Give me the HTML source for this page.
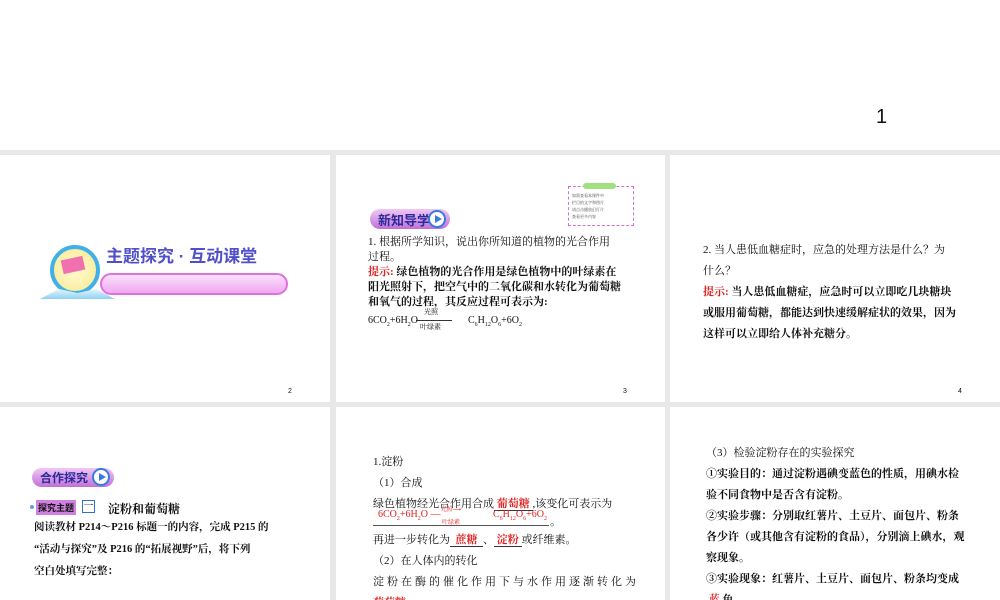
<!DOCTYPE html>
<html><head><meta charset="utf-8"><style>
*{margin:0;padding:0;box-sizing:border-box}
body{width:1000px;height:600px;background:#fff;position:relative;overflow:hidden;font-family:"Liberation Serif","Noto Serif CJK SC",serif;color:#111}
.bg{position:absolute;left:0;top:150px;width:1000px;height:450px;background:#e8e8e8}
.s{position:absolute;background:#fff;overflow:hidden}
.t{position:absolute;white-space:nowrap;font-size:12px}
.r{color:#e02020}
.n{position:absolute;font-size:7px;font-family:"Liberation Sans",sans-serif}
.sans{font-family:"Liberation Sans","Noto Sans CJK SC",sans-serif}
.pill{position:absolute;height:20px;border-radius:10px;background:linear-gradient(#f0c8f4,#c070d8);}
.pill span{position:absolute;left:8px;top:1px;font-size:13px;font-weight:bold;color:#2a2a9a;font-family:"Liberation Sans","Noto Sans CJK SC",sans-serif}
.pill i{position:absolute;top:1px;width:18px;height:18px;border-radius:50%;background:#fff;border:2px solid #3a7ae0}
.pill i:after{content:"";position:absolute;left:5px;top:3px;border-left:7px solid #3a7ae0;border-top:4.5px solid transparent;border-bottom:4.5px solid transparent}
u{text-decoration:none;border-bottom:1px solid #333;color:#e02020;font-weight:bold}
</style></head><body>
<div class="t sans" style="left:876px;top:106px;font-size:20px">1</div>
<div class="bg"></div>

<!-- slide 2 -->
<div class="s" style="left:0;top:155px;width:330px;height:247px">
 <div style="position:absolute;left:100px;top:118px;width:188px;height:22px;border-radius:11px;background:linear-gradient(#fbe0fb,#f0a8f0);border:2px solid #e070e0"></div>
 <div style="position:absolute;left:50px;top:90px;width:50px;height:50px;border-radius:50%;background:radial-gradient(#fffbd0,#f8e890);border:4px solid #40b0e8"></div>
 <div style="position:absolute;left:62px;top:103px;width:22px;height:14px;background:#f070b0;transform:rotate(-12deg)"></div>
 <div style="position:absolute;left:40px;top:134px;width:75px;height:10px;background:linear-gradient(#e8f6ff,#8fd0f0);clip-path:polygon(0 100%,25% 0,50% 40%,75% 0,100% 100%)"></div>
 <div class="t sans" style="left:106px;top:87px;font-size:17px;color:#5050c8;font-weight:bold">主题探究 · 互动课堂</div>
 <div class="n" style="left:288px;top:233px">2</div>
</div>

<!-- slide 3 -->
<div class="s" style="left:336px;top:155px;width:329px;height:247px">
 <div style="position:absolute;left:232px;top:31px;width:66px;height:40px;border:1px dashed #d070d0;background:#fff"></div>
 <div style="position:absolute;left:247px;top:28px;width:33px;height:6px;background:#a0e080;border-radius:3px"></div>
 <div class="t" style="left:236px;top:37px;font-size:4px;line-height:7px;color:#444">如需查看本课件中<br>栏目的文字和图片<br>请点击播放幻灯片<br>查看更多内容</div>
 <div class="pill" style="left:34px;top:54px;width:80px"><span>新知导学</span><i style="left:58px"></i></div>
 <div class="t" style="left:32px;top:80px;font-size:11px;line-height:15px">1. 根据所学知识，说出你所知道的植物的光合作用<br>过程。<br><b><span class="r">提示:</span> 绿色植物的光合作用是绿色植物中的叶绿素在<br>阳光照射下，把空气中的二氧化碳和水转化为葡萄糖<br>和氧气的过程，其反应过程可表示为:</b></div>
 <div class="t" style="left:32px;top:160px;font-size:10px">6CO<sub style="font-size:6px">2</sub>+6H<sub style="font-size:6px">2</sub>O</div>
 <div class="t" style="left:88px;top:152px;font-size:7px">光照</div>
 <div style="position:absolute;left:80px;top:165px;width:36px;border-top:1px solid #333"></div>
 <div class="t" style="left:84px;top:167px;font-size:7px">叶绿素</div>
 <div class="t" style="left:132px;top:160px;font-size:10px">C<sub style="font-size:6px">6</sub>H<sub style="font-size:6px">12</sub>O<sub style="font-size:6px">6</sub>+6O<sub style="font-size:6px">2</sub></div>
 <div class="n" style="left:287px;top:233px">3</div>
</div>

<!-- slide 4 -->
<div class="s" style="left:670px;top:155px;width:330px;height:247px">
 <div class="t" style="left:33px;top:85px;font-size:11px;line-height:21px">2. 当人患低血糖症时，应急的处理方法是什么？为<br>什么？<br><b><span class="r">提示:</span> 当人患低血糖症，应急时可以立即吃几块糖块<br>或服用葡萄糖，都能达到快速缓解症状的效果，因为<br>这样可以立即给人体补充糖分。</b></div>
 <div class="n" style="left:288px;top:233px">4</div>
</div>

<!-- slide 5 -->
<div class="s" style="left:0;top:407px;width:330px;height:193px">
 <div class="pill" style="left:32px;top:61px;width:82px;height:19px"><span style="font-size:12px">合作探究</span><i style="left:60px;top:0"></i></div>
 <div style="position:absolute;left:30px;top:98px;width:4px;height:4px;border-radius:50%;background:#60a0e0"></div>
 <div class="t sans" style="left:36px;top:93px;font-size:9px;background:#d080e0;padding:1px 2px;font-weight:bold">探究主题</div>
 <div class="t" style="left:82px;top:93px;font-size:10px;border:1px solid #3070d0;width:13px;height:13px;line-height:11px;text-align:center">一</div>
 <div class="t" style="left:108px;top:93px;font-weight:bold">淀粉和葡萄糖</div>
 <div class="t" style="left:34px;top:110px;font-size:10.5px;line-height:22px;font-weight:bold">阅读教材 P214～P216 标题一的内容，完成 P215 的<br>“活动与探究”及 P216 的“拓展视野”后，将下列<br>空白处填写完整：</div>
</div>

<!-- slide 6 -->
<div class="s" style="left:336px;top:407px;width:329px;height:193px">
 <div class="t" style="left:37px;top:45px;font-size:11px;line-height:21px">1.淀粉<br>（1）合成<br>绿色植物经光合作用合成<u>&nbsp;葡萄糖&nbsp;</u>,该变化可表示为</div>
 <div style="position:absolute;left:37px;top:118px;width:176px;border-top:1px solid #555"></div>
 <div class="t r" style="left:42px;top:102px;font-size:10px">6CO<sub style="font-size:6px">2</sub>+6H<sub style="font-size:6px">2</sub>O —<span style="font-size:6px;position:relative;top:-6px">光照⟶</span></div>
 <div class="t r" style="left:106px;top:110px;font-size:6px">叶绿素</div>
 <div class="t r" style="left:157px;top:102px;font-size:10px">C<sub style="font-size:6px">6</sub>H<sub style="font-size:6px">12</sub>O<sub style="font-size:6px">6</sub>+6O<sub style="font-size:6px">2</sub></div>
 <div class="t" style="left:214px;top:106px;font-size:11px">。</div>
 <div class="t" style="left:37px;top:123px;font-size:11px;line-height:21px">再进一步转化为<u>&nbsp;&nbsp;蔗糖&nbsp;&nbsp;</u>、<u>&nbsp;淀粉&nbsp;</u>或纤维素。<br>（2）在人体内的转化<br><span style="letter-spacing:3px">淀粉在酶的催化作用下与水作用逐渐转化为</span><br><b class="r">葡萄糖</b></div>
</div>

<!-- slide 7 -->
<div class="s" style="left:670px;top:407px;width:330px;height:193px">
 <div class="t" style="left:36px;top:36px;font-size:11px;line-height:21px">（3）检验淀粉存在的实验探究<br><b>①实验目的：通过淀粉遇碘变蓝色的性质，用碘水检<br>验不同食物中是否含有淀粉。<br>②实验步骤：分别取红薯片、土豆片、面包片、粉条<br>各少许（或其他含有淀粉的食品），分别滴上碘水，观<br>察现象。<br>③实验现象：红薯片、土豆片、面包片、粉条均变成<br><u>&nbsp;蓝&nbsp;</u>色。</b></div>
</div>
</body></html>
